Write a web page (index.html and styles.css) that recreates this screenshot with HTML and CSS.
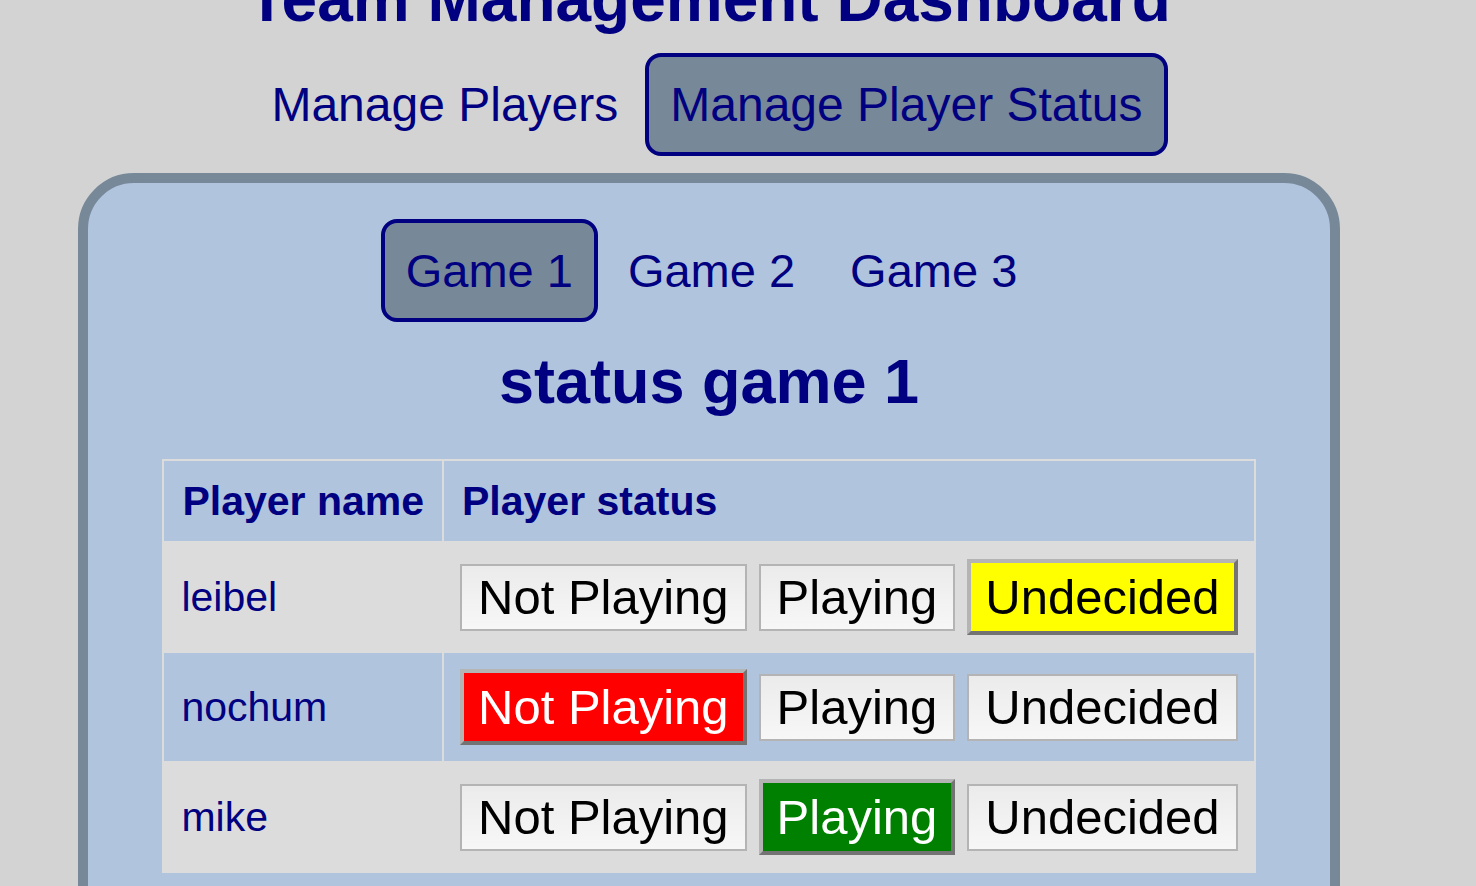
FILE: index.html
```html
<!DOCTYPE html>
<html lang="en">
<head>
<meta charset="utf-8">
<title>Team Management Dashboard</title>
<link rel="stylesheet" href="styles.css">
</head>
<body>
<div class="page">
  <h1 class="title">Team Management Dashboard</h1>
  <nav class="tabs nav">
    <a class="tab">Manage Players</a>
    <a class="tab active">Manage Player Status</a>
  </nav>
  <section class="panel">
    <div class="tabs games">
      <a class="tab">Game 1</a>
      <a class="tab plain">Game 2</a>
      <a class="tab plain">Game 3</a>
    </div>
    <h2 class="subtitle">status game 1</h2>
    <table class="status-table">
      <thead>
        <tr><th>Player name</th><th>Player status</th></tr>
      </thead>
      <tbody>
        <tr class="row-alt">
          <td class="name">leibel</td>
          <td class="status">
            <div class="btns">
              <button class="sbtn">Not Playing</button>
              <button class="sbtn">Playing</button>
              <button class="sbtn sel undecided">Undecided</button>
            </div>
          </td>
        </tr>
        <tr>
          <td class="name">nochum</td>
          <td class="status">
            <div class="btns">
              <button class="sbtn sel notplaying">Not Playing</button>
              <button class="sbtn">Playing</button>
              <button class="sbtn">Undecided</button>
            </div>
          </td>
        </tr>
        <tr class="row-alt">
          <td class="name">mike</td>
          <td class="status">
            <div class="btns">
              <button class="sbtn">Not Playing</button>
              <button class="sbtn sel playing">Playing</button>
              <button class="sbtn">Undecided</button>
            </div>
          </td>
        </tr>
      </tbody>
    </table>
  </section>
</div>
</body>
</html>
```
FILE: styles.css
```css
html, body {
  margin: 0;
  padding: 0;
  overflow: hidden;
}
body {
  background: #d3d3d3;
  font-family: "Liberation Sans", Arial, Helvetica, sans-serif;
  color: #000080;
}
.page {
  width: 1418px;
  display: flex;
  flex-direction: column;
  align-items: center;
}
.title {
  font-size: 64px;
  line-height: 73px;
  font-weight: bold;
  margin: -37px 0 17px;
  text-align: center;
}
.tabs {
  display: flex;
  justify-content: center;
  gap: 5px;
}
.tab {
  font-size: 47px;
  line-height: 54px;
  padding: 20.5px 21px;
  border: 4px solid transparent;
  border-radius: 16px;
  color: #000080;
  cursor: pointer;
}
.nav {
  gap: 2px;
  margin-bottom: 17px;
  margin-left: -4px;
}
.nav .tab {
  font-size: 48px;
  line-height: 55px;
  padding: 20px 21px;
}
.nav .tab.active,
.games .tab:first-child {
  background: #778899;
  border-color: #000080;
}
.panel {
  width: 1242px;
  border: 10px solid #778899;
  border-radius: 56px;
  background: #b0c4de;
  padding: 36px 0 80px;
  display: flex;
  flex-direction: column;
  align-items: center;
}
.games {
  margin-left: 5px;
}
.subtitle {
  font-size: 63px;
  line-height: 72px;
  font-weight: bold;
  margin: 23px 0 42px;
}
.status-table {
  border-collapse: collapse;
  border: 2px solid #dcdcdc;
}
.status-table th,
.status-table td {
  border: 2px solid #dcdcdc;
}
.status-table th {
  font-size: 41px;
  line-height: 47px;
  font-weight: bold;
  text-align: left;
  padding: 16.5px 18px;
}
.status-table td {
  font-size: 41px;
  line-height: 47px;
  padding: 16px 18px 16px 17px;
  vertical-align: middle;
}
.status-table td.status {
  padding: 16px 16px;
}
.row-alt td {
  background: #dcdcdc;
}
.btns {
  display: flex;
  align-items: center;
  gap: 12px;
}
.sbtn {
  font-family: "Liberation Sans", Arial, Helvetica, sans-serif;
  font-size: 49px;
  line-height: 56px;
  color: #000;
  padding: 3.5px 16px;
  margin: 0;
  border: 2px solid #b4b4b4;
  border-radius: 0;
  background: linear-gradient(#ebebeb, #f7f7f7);
  white-space: nowrap;
}
.sbtn.sel {
  padding: 6px 14px;
  border-width: 4px;
  border-color: #b4b4b4 #737373 #737373 #b4b4b4;
}
.sbtn.undecided {
  background: #ffff00;
  color: #000;
}
.sbtn.notplaying {
  background: #ff0000;
  color: #fff;
}
.sbtn.playing {
  background: #008000;
  color: #fff;
}
```
